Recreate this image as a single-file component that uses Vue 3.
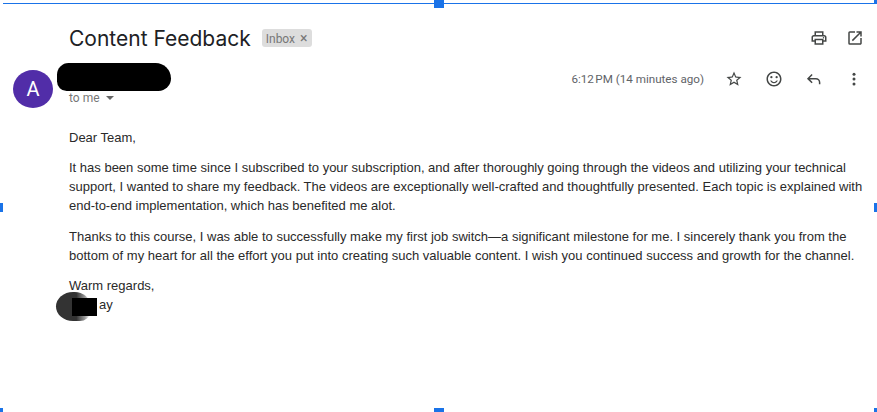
<template>
  <div class="page">
    <header class="subject">
      <h1 class="title">Content Feedback</h1>
      <span class="label">Inbox <span class="label-x">×</span></span>
      <div class="subject-icons">
        <svg class="icon" viewBox="0 0 24 24"><path d="M19 8h-1V3H6v5H5c-1.66 0-3 1.34-3 3v6h4v4h12v-4h4v-6c0-1.66-1.34-3-3-3zM8 5h8v3H8V5zm8 14H8v-4h8v4zm2-4v-2H6v2H4v-4c0-.55.45-1 1-1h14c.55 0 1 .45 1 1v4h-2z"/><circle cx="18" cy="11.5" r="1"/></svg>
        <svg class="icon" viewBox="0 0 24 24"><path d="M19 19H5V5h7V3H5a2 2 0 0 0-2 2v14a2 2 0 0 0 2 2h14c1.1 0 2-.9 2-2v-7h-2v7zM14 3v2h3.59l-9.83 9.83 1.41 1.41L19 6.41V10h2V3h-7z"/></svg>
      </div>
    </header>

    <section class="sender">
      <div class="avatar">A</div>
      <div class="from">
        <div class="name"></div>
        <div class="to">to me <span class="caret"></span></div>
      </div>
      <div class="meta">
        <span class="time">6:12&#8239;PM (14 minutes ago)</span>
        <div class="meta-icons">
          <svg class="icon" viewBox="0 0 24 24"><path d="M22 9.24l-7.19-.62L12 2 9.19 8.63 2 9.24l5.46 4.73L5.82 21 12 17.27 18.18 21l-1.63-7.03L22 9.24zM12 15.4l-3.76 2.27 1-4.28-3.32-2.88 4.38-.38L12 6.1l1.71 4.04 4.38.38-3.32 2.88 1 4.28L12 15.4z"/></svg>
          <svg class="icon" viewBox="0 0 24 24"><circle cx="15.5" cy="9.5" r="1.5"/><circle cx="8.5" cy="9.5" r="1.5"/><path d="M12 2C6.47 2 2 6.5 2 12s4.47 10 10 10 10-4.5 10-10S17.53 2 12 2zm0 18c-4.42 0-8-3.58-8-8s3.58-8 8-8 8 3.58 8 8-3.58 8-8 8zm0-2.5c2.33 0 4.32-1.45 5.12-3.5h-1.67c-.69 1.19-1.97 2-3.45 2s-2.75-.81-3.45-2H6.88c.8 2.05 2.79 3.5 5.12 3.5z"/></svg>
          <svg class="icon" viewBox="0 0 24 24"><path class="reply" d="M9.5 6 4 11.5 9.5 17M4 11.5h10.5a5 5 0 0 1 5 5V19"/></svg>
          <svg class="icon" viewBox="0 0 24 24"><circle cx="12" cy="5.5" r="2"/><circle cx="12" cy="12" r="2"/><circle cx="12" cy="18.5" r="2"/></svg>
        </div>
      </div>
    </section>

    <article class="body">
      <p>Dear Team,</p>
      <p>It has been some time since I subscribed to your subscription, and after thoroughly going through the videos and utilizing your technical support, I wanted to share my feedback. The videos are exceptionally well-crafted and thoughtfully presented. Each topic is explained with end-to-end implementation, which has benefited me alot.</p>
      <p>Thanks to this course, I was able to successfully make my first job switch—a significant milestone for me. I sincerely thank you from the bottom of my heart for all the effort you put into creating such valuable content. I wish you continued success and growth for the channel.</p>
      <p class="signoff">Warm regards,<br /><span class="signer">ay<i class="smudge"></i><i class="block"></i></span></p>
    </article>

    <i class="edge"></i>
    <i v-for="h in handles" :key="h" class="handle" :class="h"></i>
  </div>
</template>

<script setup>
const handles = ['top-mid', 'top-right', 'left-mid', 'right-mid', 'bottom-left', 'bottom-mid', 'bottom-right']
</script>

<style>
html, body {
  margin: 0;
  background: #fff;
}
</style>

<style scoped>
.page {
  position: relative;
  width: 877px;
  height: 412px;
  overflow: hidden;
  box-sizing: border-box;
  background: #fff;
  padding-top: 24px;
  font-family: "Liberation Sans", Arial, sans-serif;
}
.subject {
  display: flex;
  align-items: center;
  height: 28px;
  padding: 0 13px 0 69px;
}
.title {
  margin: 0;
  font-family: Inter, Roboto, sans-serif;
  font-size: 21px;
  font-weight: 400;
  color: #202124;
}
.label {
  margin-left: 11px;
  padding: 0 4px;
  height: 18px;
  line-height: 18px;
  border-radius: 3px;
  background: #dddddd;
  color: #777;
  font-family: Roboto, sans-serif;
  font-size: 12px;
}
.label-x {
  font-size: 14px;
  margin-left: 2px;
}
.subject-icons {
  margin-left: auto;
  display: flex;
  gap: 18px;
}
.icon {
  width: 18px;
  height: 18px;
  fill: #444746;
  display: block;
}
.reply {
  fill: none;
  stroke: #444746;
  stroke-width: 2;
}
.sender {
  display: flex;
  align-items: flex-start;
  height: 44px;
  margin-top: 10px;
  padding: 0 13px;
}
.avatar {
  width: 40px;
  height: 38px;
  margin-top: 8px;
  border-radius: 50%;
  background: #512da8;
  color: #fff;
  font-family: Roboto, sans-serif;
  font-size: 20px;
  line-height: 38px;
  text-align: center;
}
.from {
  margin-left: 16px;
}
.name {
  width: 114px;
  height: 28px;
  margin-left: -12px;
  margin-top: 1px;
  background: #000;
  border-radius: 12px 16px 13px 10px;
}
.to {
  color: #777;
  font-family: Roboto, sans-serif;
  font-size: 12px;
  line-height: 15px;
}
.caret {
  display: inline-block;
  margin-left: 3px;
  vertical-align: 2px;
  border: 4px solid transparent;
  border-top-color: #666;
  border-bottom-width: 0;
}
.meta {
  margin-left: auto;
  height: 34px;
  display: flex;
  align-items: center;
}
.time {
  color: #5f6368;
  font-family: Roboto, sans-serif;
  font-size: 11.65px;
}
.meta-icons {
  display: flex;
  gap: 22px;
  margin-left: 21px;
  margin-right: 1px;
}
.body {
  margin-top: 21.8px;
  padding: 0 10px 0 69px;
  color: #2a2a2a;
  font-size: 13px;
  line-height: 19px;
}
.body p {
  margin: 0 0 11.5px;
}
.signer {
  position: relative;
  display: inline-block;
  padding-left: 30px;
}
.smudge {
  position: absolute;
  left: -13px;
  top: -3px;
  width: 34px;
  height: 29px;
  border-radius: 50% 45% 30% 50%;
  background: linear-gradient(90deg, #333 60%, #999 85%, rgba(255, 255, 255, 0));
}
.block {
  position: absolute;
  left: 3px;
  top: 3px;
  width: 25px;
  height: 18px;
  background: #000;
}
.edge {
  position: absolute;
  left: 3px;
  right: 0;
  top: 3px;
  height: 1px;
  background: #1a73e8;
}
.handle {
  position: absolute;
  background: #1a73e8;
}
.top-mid {
  left: 434px;
  top: 0;
  width: 10px;
  height: 8px;
}
.top-right {
  left: 874px;
  top: 0;
  width: 3px;
  height: 4px;
}
.left-mid {
  left: 0;
  top: 203px;
  width: 3px;
  height: 9px;
}
.right-mid {
  left: 874px;
  top: 203px;
  width: 3px;
  height: 9px;
}
.bottom-left {
  left: 0;
  top: 408px;
  width: 3px;
  height: 4px;
}
.bottom-mid {
  left: 434px;
  top: 408px;
  width: 10px;
  height: 4px;
}
.bottom-right {
  left: 874px;
  top: 408px;
  width: 3px;
  height: 4px;
}
</style>
